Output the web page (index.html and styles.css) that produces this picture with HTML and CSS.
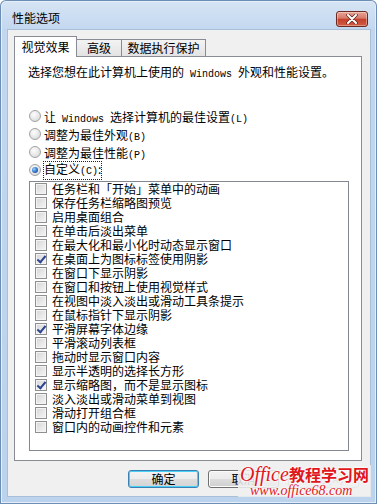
FILE: index.html
```html
<!DOCTYPE html>
<html lang="zh-CN">

<head>
    <meta charset="UTF-8">
    <title>性能选项</title>
    <link rel="stylesheet" href="styles.css">
</head>

<body>
    <div class="window">
        <div class="title-bar">
            <span class="title">性能选项</span>
            <button class="close-btn" aria-label="关闭">
                <svg width="14" height="10" viewBox="0 0 14 10">
                    <path d="M3 1 L11 9 M11 1 L3 9" stroke="#5a2418" stroke-width="3.4" stroke-linecap="round" />
                    <path d="M3 1 L11 9 M11 1 L3 9" stroke="#fff" stroke-width="2" stroke-linecap="round" />
                </svg>
            </button>
        </div>

        <div class="client">
            <div class="tabs">
                <div class="tab active">视觉效果</div>
                <div class="tab">高级</div>
                <div class="tab">数据执行保护</div>
            </div>

            <div class="tab-page">
                <p class="intro">选择您想在此计算机上使用的<span class="en"> Windows </span>外观和性能设置。</p>

                <div class="options">
                    <div class="radio-row"><span class="radio"></span><span>让<span class="en"> Windows </span>选择计算机的最佳设置<span class="en">(L)</span></span></div>
                    <div class="radio-row"><span class="radio"></span><span>调整为最佳外观<span class="en">(B)</span></span></div>
                    <div class="radio-row"><span class="radio"></span><span>调整为最佳性能<span class="en">(P)</span></span></div>
                    <div class="radio-row"><span class="radio checked"></span><span class="focus">自定义<span class="en">(C)</span>:</span></div>
                </div>

                <div class="effects-list">
                    <!-- rows are filled from the list below -->
                </div>
            </div>

            <div class="dialog-buttons">
                <button class="btn default">确定</button>
                <button class="btn">取消</button>
                <button class="btn" disabled>应用<span class="en">(A)</span></button>
            </div>
        </div>

        <div class="watermark">
            <div class="wm-top"><span class="wm-office">Office</span><span class="wm-cn">教程学习网</span></div>
            <div class="wm-url">www.office68.com</div>
        </div>
    </div>

    <script>
        // visual effects, checked ones marked with true
        const effects = [
            ["任务栏和「开始」菜单中的动画", false],
            ["保存任务栏缩略图预览", false],
            ["启用桌面组合", false],
            ["在单击后淡出菜单", false],
            ["在最大化和最小化时动态显示窗口", false],
            ["在桌面上为图标标签使用阴影", true],
            ["在窗口下显示阴影", false],
            ["在窗口和按钮上使用视觉样式", false],
            ["在视图中淡入淡出或滑动工具条提示", false],
            ["在鼠标指针下显示阴影", false],
            ["平滑屏幕字体边缘", true],
            ["平滑滚动列表框", false],
            ["拖动时显示窗口内容", false],
            ["显示半透明的选择长方形", false],
            ["显示缩略图，而不是显示图标", true],
            ["淡入淡出或滑动菜单到视图", false],
            ["滑动打开组合框", false],
            ["窗口内的动画控件和元素", false],
        ];

        const list = document.querySelector(".effects-list");
        effects.forEach(([text, on]) => {
            list.insertAdjacentHTML("beforeend", `
                <div class="check-row">
                    <span class="check${on ? " on" : ""}"></span><span>${text}</span>
                </div>`);
        });
    </script>
</body>

</html>
```

FILE: styles.css
```css
body {
    margin: 0;
    padding: 0;
    font-family: "Noto Sans CJK SC", "Liberation Sans", sans-serif;
    font-size: 12px;
    color: #000;
    background-color: #fff;
}

.en {
    font-family: "Liberation Mono", monospace;
    font-size: 10px;
    white-space: pre;
}

.window {
    position: relative;
    width: 377px;
    height: 504px;
    box-sizing: border-box;
    padding: 0 7px 8px 8px;
    background: linear-gradient(to bottom, #d7e5f5 0, #c2d7ef 30px, #bcd3ed 100%);
    border-radius: 6px 6px 0 0;
    box-shadow: inset 0 0 0 1px #6d8fb6, inset 0 0 0 2px #e4eefa;
}

.title-bar {
    height: 30px;
    display: flex;
    align-items: center;
    justify-content: space-between;
}

.title {
    margin-left: 4px;
    padding-top: 4px;
}

.close-btn {
    width: 32px;
    height: 16px;
    margin-top: 7px;
    margin-right: 2px;
    padding: 0;
    border: 1px solid #6b2b22;
    border-radius: 3px;
    background: linear-gradient(to bottom, #e8a595 0, #d7796a 45%, #c3402b 50%, #d35c43 100%);
    box-shadow: inset 0 0 0 1px rgba(255, 255, 255, 0.35);
    display: flex;
    align-items: center;
    justify-content: center;
}

.client {
    height: 466px;
    box-sizing: border-box;
    padding: 6px 8px 0 6px;
    background-color: #f0f0f0;
    box-shadow: 0 0 0 1px #a9bfd8;
}

.tabs {
    display: flex;
    align-items: flex-end;
    height: 20px;
}

.tab {
    height: 17px;
    box-sizing: border-box;
    border: 1px solid #898c95;
    border-bottom: none;
    background: linear-gradient(to bottom, #f3f3f3, #e3e3e3);
    text-align: center;
    line-height: 15px;
    margin-left: -1px;
}

.tab:nth-child(2) {
    width: 46px;
}

.tab:nth-child(3) {
    width: 85px;
}

.tab.active {
    position: relative;
    z-index: 1;
    width: 63px;
    height: 21px;
    margin-left: 0;
    margin-bottom: -1px;
    background: #fff;
    line-height: 19px;
}

.tab-page {
    height: 405px;
    box-sizing: border-box;
    border: 1px solid #898c95;
    background-color: #fff;
    padding: 0 13px;
}

.intro {
    margin: 7px 0 0;
    line-height: 16px;
}

.options {
    margin: 24px 0 0 1px;
}

.radio-row {
    display: flex;
    align-items: center;
    height: 18px;
}

.radio {
    width: 12px;
    height: 12px;
    box-sizing: border-box;
    border-radius: 50%;
    border: 1px solid #a2a2a2;
    background: radial-gradient(circle at 40% 35%, #fdfdfd 0, #e4e4e4 60%, #cfcfcf 100%);
    margin-right: 3px;
    position: relative;
}

.radio.checked::after {
    content: "";
    position: absolute;
    left: 2px;
    top: 2px;
    width: 6px;
    height: 6px;
    border-radius: 50%;
    background: radial-gradient(circle at 35% 35%, #9fd0ff 0, #2a6fc6 55%, #153f86 100%);
}

.focus {
    outline: 1px dotted #222;
    outline-offset: 0;
    line-height: 14px;
}

.effects-list {
    width: 320px;
    height: 270px;
    box-sizing: border-box;
    margin: 2px 0 0 1px;
    border: 1px solid #828790;
    background-color: #fff;
}

.check-row {
    display: flex;
    align-items: center;
    height: 14px;
    padding-left: 5px;
    line-height: 14px;
}

.check {
    width: 12px;
    height: 12px;
    box-sizing: border-box;
    border: 1px solid #8e8f8f;
    background: linear-gradient(135deg, #d4d4d4 0, #e6e6e6 50%, #f7f7f7 100%);
    box-shadow: inset 0 0 0 1px #f4f4f4;
    margin-right: 5px;
    position: relative;
}

.check.on::after {
    content: "";
    position: absolute;
    left: 3px;
    top: 0;
    width: 3px;
    height: 7px;
    border: solid #2b4490;
    border-width: 0 2px 2px 0;
    transform: rotate(40deg);
}

.dialog-buttons {
    display: flex;
    gap: 9px;
    margin: 9px 0 0 114px;
}

.btn {
    width: 71px;
    height: 18px;
    padding: 0;
    font-family: inherit;
    font-size: 12px;
    line-height: 14px;
    color: #000;
    border: 1px solid #707070;
    border-radius: 3px;
    background: linear-gradient(to bottom, #f2f2f2 0, #ebebeb 50%, #dddddd 51%, #cfcfcf 100%);
    box-shadow: inset 0 0 0 1px #fcfcfc;
}

.btn.default {
    border-color: #3c7fb1;
    background: linear-gradient(to bottom, #f3f3f3 0, #ececec 50%, #dedede 51%, #d3d3d3 100%);
    box-shadow: inset 0 0 0 1px #48d0f8;
}

.btn:disabled {
    color: #838383;
    border-color: #adb2b5;
    background: #f4f4f4;
}

.watermark {
    position: absolute;
    left: 238px;
    top: 465px;
    color: #e0161c;
    text-shadow: 0 0 2px #fff, 0 0 2px #fff, 0 0 3px #fff;
    background: rgba(240, 240, 240, 0.85);
    padding: 0 2px;
}

.wm-top {
    display: flex;
    align-items: baseline;
    height: 19px;
}

.wm-office {
    font-family: "Liberation Serif", serif;
    font-style: italic;
    font-size: 20px;
    line-height: 19px;
}

.wm-cn {
    font-weight: bold;
    font-size: 16px;
    line-height: 19px;
}

.wm-url {
    margin-left: 10px;
    font-family: "Liberation Serif", serif;
    font-style: italic;
    font-size: 14px;
    line-height: 13px;
}
```
